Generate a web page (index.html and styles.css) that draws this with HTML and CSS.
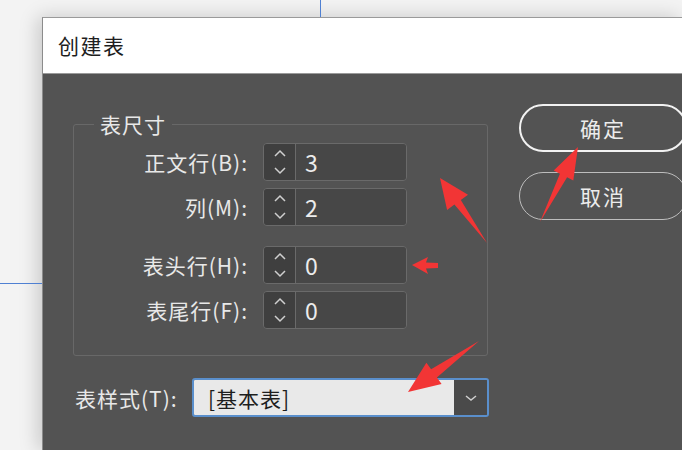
FILE: index.html
```html
<!DOCTYPE html>
<html lang="zh-CN">

<head>
    <meta charset="UTF-8">
    <meta name="viewport" content="width=device-width, initial-scale=1.0">
    <title>创建表</title>
    <link rel="stylesheet" href="styles.css">
</head>

<body>
    <div class="guide guide-v"></div>
    <div class="guide guide-h"></div>

    <div class="dialog">
        <div class="titlebar">创建表</div>
        <div class="dialog-body">
            <div class="main-col">
                <fieldset class="group">
                    <legend>表尺寸</legend>
                    <div class="field-rows">
                        <label class="field-label">正文行(B):</label>
                        <div class="spinner">
                            <span class="spin-arrows">
                                <svg viewBox="0 0 14 30" width="14" height="30"><path d="M2 9 L7 4 L12 9 M2 21 L7 26 L12 21" /></svg>
                            </span>
                            <span class="spin-value">3</span>
                        </div>

                        <label class="field-label">列(M):</label>
                        <div class="spinner">
                            <span class="spin-arrows">
                                <svg viewBox="0 0 14 30" width="14" height="30"><path d="M2 9 L7 4 L12 9 M2 21 L7 26 L12 21" /></svg>
                            </span>
                            <span class="spin-value">2</span>
                        </div>

                        <label class="field-label spaced">表头行(H):</label>
                        <div class="spinner spaced">
                            <span class="spin-arrows">
                                <svg viewBox="0 0 14 30" width="14" height="30"><path d="M2 9 L7 4 L12 9 M2 21 L7 26 L12 21" /></svg>
                            </span>
                            <span class="spin-value">0</span>
                        </div>

                        <label class="field-label">表尾行(F):</label>
                        <div class="spinner">
                            <span class="spin-arrows">
                                <svg viewBox="0 0 14 30" width="14" height="30"><path d="M2 9 L7 4 L12 9 M2 21 L7 26 L12 21" /></svg>
                            </span>
                            <span class="spin-value">0</span>
                        </div>
                    </div>
                </fieldset>

                <div class="style-row">
                    <span class="field-label">表样式(T):</span>
                    <div class="select">
                        <span class="select-text">[基本表]</span>
                        <span class="select-btn">
                            <svg viewBox="0 0 16 10" width="16" height="10"><path d="M3 3 L8 7 L13 3" /></svg>
                        </span>
                    </div>
                </div>
            </div>

            <div class="button-col">
                <button class="pill-btn primary">确定</button>
                <button class="pill-btn">取消</button>
            </div>
        </div>
    </div>

    <!-- red annotation arrows drawn over the screenshot -->
    <svg class="marks" viewBox="0 0 682 450" width="682" height="450">
        <polygon points="487,243 460.8,200 468,194.7 440,178 447.1,209.9 454.4,204.6" />
        <polygon points="438,263 426,262.5 428,257 412,265 428,274 426,268.5 438,268" />
        <polygon points="479,341 436.9,377.4 441.6,383.9 408,392 426.4,362.7 431.1,369.2" />
        <polygon points="540,222 559.9,173.7 553.7,170.5 578,147 573.3,180.5 567.1,177.3" />
    </svg>
</body>

</html>
```

FILE: styles.css
```css
/* Dialog on a light canvas */
html, body {
    height: 450px;
}

body {
    margin: 0;
    overflow: hidden;
    position: relative;
    background-color: #f3f3f3;
    font-family: 'Noto Sans CJK SC', 'Noto Sans', sans-serif;
}

.guide {
    position: absolute;
    background-color: #4f80d2;
}

.guide-v {
    left: 320px;
    top: 0;
    width: 1px;
    height: 17px;
}

.guide-h {
    left: 0;
    top: 283px;
    width: 42px;
    height: 1px;
}

.dialog {
    box-sizing: border-box;
    margin: 17px 0 0 42px;
    width: 640px;
    height: 433px;
    overflow: hidden;
    background: #535353;
    border-left: 1px solid #8c8c8c;
    border-top: 1px solid #9a9a9a;
    box-shadow: -4px 0 18px rgba(0, 0, 0, 0.18);
}

.titlebar {
    height: 55px;
    line-height: 55px;
    padding-left: 15px;
    background: #ffffff;
    color: #1e1e1e;
    font-size: 21px;
    letter-spacing: 1.5px;
    border-bottom: 1px solid #9a9a9a;
}

.dialog-body {
    display: flex;
    padding: 30px 0 0 30px;
}

.main-col {
    flex-shrink: 0;
    margin-top: 9px;
    width: 416px;
}

.group {
    box-sizing: border-box;
    width: 415px;
    margin: 0;
    padding: 8px 0 26px 0;
    border: 1px solid #686868;
    border-radius: 3px;
}

.group legend {
    margin-left: 20px;
    padding: 0 6px;
    font-size: 21px;
    line-height: 22px;
    color: #e8e8e8;
    letter-spacing: 1px;
}

.field-rows {
    display: grid;
    grid-template-columns: 174px 144px;
    column-gap: 15px;
    row-gap: 7px;
    align-items: center;
}

.field-label {
    text-align: right;
    font-size: 21px;
    color: #e8e8e8;
    letter-spacing: 1px;
    white-space: nowrap;
}

.spaced {
    margin-top: 13px;
}

.spinner {
    display: flex;
    box-sizing: border-box;
    height: 38px;
    border: 1px solid #6a6a6a;
    border-radius: 4px;
    overflow: hidden;
}

.spin-arrows {
    width: 31px;
    display: flex;
    align-items: center;
    justify-content: center;
    background: #3f3f3f;
    border-right: 1px solid #6a6a6a;
}

.spin-arrows svg path,
.select-btn svg path {
    fill: none;
    stroke: #cfcfcf;
    stroke-width: 1.5;
}

.spin-value {
    flex: 1;
    display: flex;
    align-items: center;
    padding-left: 9px;
    background: #474747;
    color: #ececec;
    font-size: 23px;
}

.style-row {
    display: flex;
    align-items: center;
    margin-top: 22px;
    padding-left: 2px;
}

.style-row .field-label {
    width: 117px;
    text-align: left;
}

.select {
    display: flex;
    box-sizing: border-box;
    width: 297px;
    height: 39px;
    border: 2px solid #5a8fcc;
    border-radius: 3px;
    overflow: hidden;
}

.select-text {
    flex: 1;
    display: flex;
    align-items: center;
    padding-left: 14px;
    background: #e9e9e9;
    color: #1e1e1e;
    font-size: 21px;
    letter-spacing: 1px;
}

.select-btn {
    width: 33px;
    display: flex;
    align-items: center;
    justify-content: center;
    background: #4a4a4a;
}

.button-col {
    flex-shrink: 0;
    display: flex;
    flex-direction: column;
    gap: 20px;
    margin-left: 30px;
}

.pill-btn {
    box-sizing: border-box;
    width: 168px;
    height: 48px;
    border-radius: 24px;
    background: transparent;
    border: 1.5px solid #bdbdbd;
    color: #ececec;
    font-family: 'Noto Sans CJK SC', 'Noto Sans', sans-serif;
    font-size: 21px;
    letter-spacing: 2px;
}

.pill-btn.primary {
    border: 2.5px solid #f2f2f2;
}

.marks {
    position: absolute;
    left: 0;
    top: 0;
    pointer-events: none;
}

.marks polygon {
    fill: #f23535;
}
```
